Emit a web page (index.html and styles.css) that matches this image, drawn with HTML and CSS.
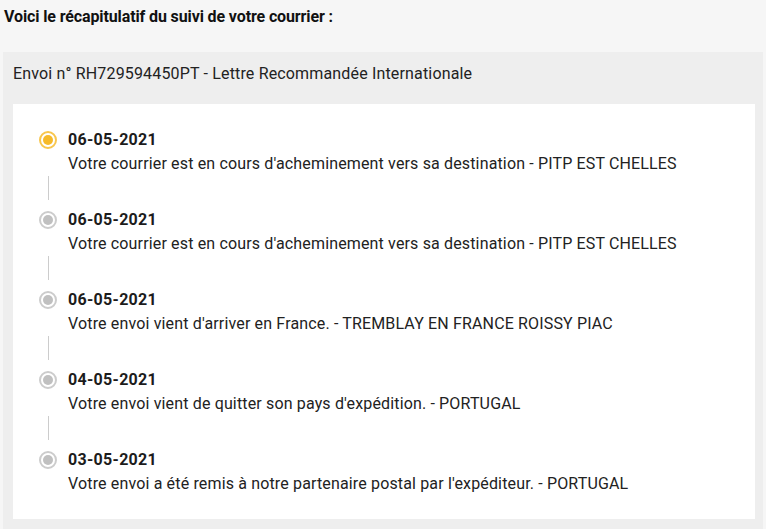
FILE: index.html
```html
<!DOCTYPE html>
<html lang="fr">
<head>
    <meta charset="UTF-8">
    <title>Suivi de votre courrier</title>
    <link rel="stylesheet" href="styles.css">
</head>
<body>
    <h1 class="intro">Voici le récapitulatif du suivi de votre courrier :</h1>

    <div class="shipment">
        <div class="shipment-title">Envoi n° RH729594450PT - Lettre Recommandée Internationale</div>
        <div class="timeline">
            <div class="step current">
                <div class="marker"><span class="dot"></span><span class="line"></span></div>
                <div class="info">
                    <div class="date">06-05-2021</div>
                    <div class="desc">Votre courrier est en cours d'acheminement vers sa destination - PITP EST CHELLES</div>
                </div>
            </div>
            <div class="step">
                <div class="marker"><span class="dot"></span><span class="line"></span></div>
                <div class="info">
                    <div class="date">06-05-2021</div>
                    <div class="desc">Votre courrier est en cours d'acheminement vers sa destination - PITP EST CHELLES</div>
                </div>
            </div>
            <div class="step">
                <div class="marker"><span class="dot"></span><span class="line"></span></div>
                <div class="info">
                    <div class="date">06-05-2021</div>
                    <div class="desc">Votre envoi vient d'arriver en France. - TREMBLAY EN FRANCE ROISSY PIAC</div>
                </div>
            </div>
            <div class="step">
                <div class="marker"><span class="dot"></span><span class="line"></span></div>
                <div class="info">
                    <div class="date">04-05-2021</div>
                    <div class="desc">Votre envoi vient de quitter son pays d'expédition. - PORTUGAL</div>
                </div>
            </div>
            <div class="step">
                <div class="marker"><span class="dot"></span><span class="line"></span></div>
                <div class="info">
                    <div class="date">03-05-2021</div>
                    <div class="desc">Votre envoi a été remis à notre partenaire postal par l'expéditeur. - PORTUGAL</div>
                </div>
            </div>
        </div>
    </div>
</body>
</html>
```
FILE: styles.css
```css
body {
    font-family: Roboto, "Liberation Sans", Arial, sans-serif;
    margin: 0;
    padding: 0;
    background-color: #f6f6f6;
    color: #212121;
}
.intro {
    font-size: 16px;
    font-weight: bold;
    letter-spacing: -0.12px;
    line-height: 20px;
    margin: 0;
    padding: 7px 0 0 4px;
    color: #111;
}
.shipment {
    margin: 25px 3px 0 3px;
    padding: 0 8px 10px 10px;
    background: #eeeeee;
}
.shipment-title {
    font-size: 16px;
    letter-spacing: 0.16px;
    line-height: 22px;
    padding: 11px 0 0 0;
    height: 40px;
    box-sizing: border-box;
    color: #222;
    margin-bottom: 12px;
}
.timeline {
    background: white;
    padding: 25px 20px 24px 26px;
}
.step {
    display: flex;
    align-items: flex-start;
    margin-bottom: 9px;
}
.step:last-child {
    margin-bottom: 0;
}
.marker {
    width: 18px;
    margin-right: 11px;
    padding-top: 2px;
    display: flex;
    flex-direction: column;
    align-items: center;
}
.dot {
    width: 18px;
    height: 18px;
    box-sizing: border-box;
    border: 2px solid #cccccc;
    border-radius: 50%;
    position: relative;
}
.dot::after {
    content: "";
    position: absolute;
    top: 2px;
    left: 2px;
    width: 10px;
    height: 10px;
    border-radius: 50%;
    background: #c0c0c0;
}
.current .dot {
    border-color: #f8c64d;
}
.current .dot::after {
    background: #f6ba2a;
}
.line {
    width: 1px;
    height: 24px;
    margin-top: 27px;
    background: #cccccc;
}
.step:last-child .line {
    display: none;
}
.date {
    font-size: 16px;
    font-weight: bold;
    letter-spacing: 0.3px;
    line-height: 22px;
    color: #1c1c1c;
}
.desc {
    font-size: 16px;
    letter-spacing: 0.15px;
    line-height: 22px;
    margin-top: 2px;
    color: #222;
}
```
